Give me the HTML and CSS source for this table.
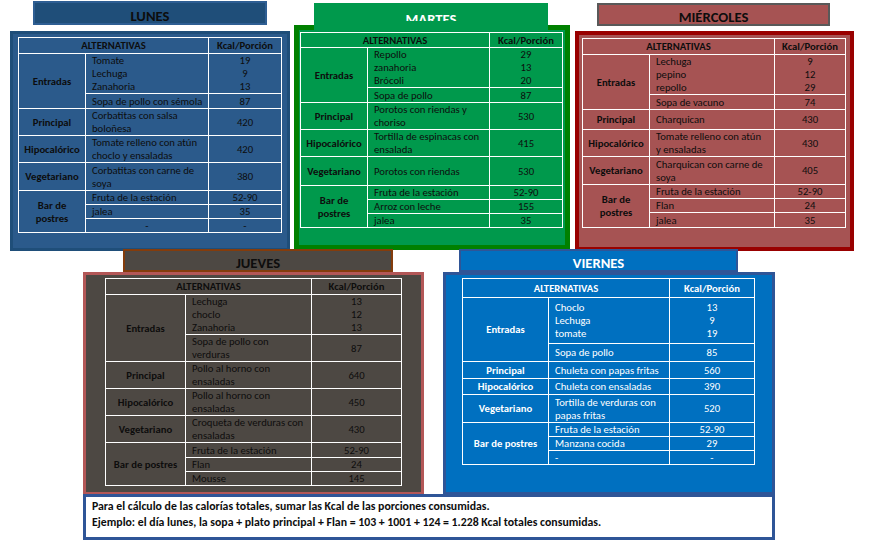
FILE: index.html
```html
<!DOCTYPE html>
<html lang="es">
<head>
<meta charset="utf-8">
<title>Menú semanal</title>
<link rel="stylesheet" href="styles.css">
</head>
<body>
<div class="canvas">

  <section class="panel lunes">
    <table class="menu">
      <colgroup><col class="c1"><col class="c2"><col class="c3"></colgroup>
      <tr class="hdr"><th colspan="2">ALTERNATIVAS</th><th>Kcal/Porción</th></tr>
      <tr class="r40"><th rowspan="2">Entradas</th><td>Tomate<br>Lechuga<br>Zanahoria</td><td class="n">19<br>9<br>13</td></tr>
      <tr class="r15"><td>Sopa de pollo con sémola</td><td class="n">87</td></tr>
      <tr class="r27"><th>Principal</th><td>Corbatitas con salsa<br>boloñesa</td><td class="n">420</td></tr>
      <tr class="r27"><th>Hipocalórico</th><td>Tomate relleno con atún<br>choclo y ensaladas</td><td class="n">420</td></tr>
      <tr class="r28"><th>Vegetariano</th><td>Corbatitas con carne de<br>soya</td><td class="n">380</td></tr>
      <tr class="r14"><th rowspan="3">Bar de<br>postres</th><td>Fruta de la estación</td><td class="n">52-90</td></tr>
      <tr class="r14"><td>jalea</td><td class="n">35</td></tr>
      <tr class="r12"><td class="n">-</td><td class="n">-</td></tr>
    </table>
  </section>
  <div class="title t-lunes">LUNES</div>

  <section class="panel martes">
    <table class="menu">
      <colgroup><col class="c1"><col class="c2"><col class="c3"></colgroup>
      <tr class="hdr m"><th colspan="2">ALTERNATIVAS</th><th>Kcal/Porción</th></tr>
      <tr class="r40"><th rowspan="2">Entradas</th><td>Repollo<br>zanahoria<br>Brócoli</td><td class="n">29<br>13<br>20</td></tr>
      <tr class="r15"><td>Sopa de pollo</td><td class="n">87</td></tr>
      <tr class="r27"><th>Principal</th><td>Porotos con riendas y<br>choriso</td><td class="n">530</td></tr>
      <tr class="r26"><th>Hipocalórico</th><td>Tortilla de espinacas con<br>ensalada</td><td class="n">415</td></tr>
      <tr class="r29"><th>Vegetariano</th><td>Porotos con riendas</td><td class="n">530</td></tr>
      <tr class="r13"><th rowspan="3">Bar de<br>postres</th><td>Fruta de la estación</td><td class="n">52-90</td></tr>
      <tr class="r14"><td>Arroz con leche</td><td class="n">155</td></tr>
      <tr class="r13"><td>jalea</td><td class="n">35</td></tr>
    </table>
  </section>
  <div class="title t-martes"><span class="clip">MARTES</span></div>

  <section class="panel miercoles">
    <table class="menu">
      <colgroup><col class="c1"><col class="c2"><col class="c3"></colgroup>
      <tr class="hdr"><th colspan="2">ALTERNATIVAS</th><th>Kcal/Porción</th></tr>
      <tr class="r40"><th rowspan="2">Entradas</th><td>Lechuga<br>pepino<br>repollo</td><td class="n">9<br>12<br>29</td></tr>
      <tr class="r15"><td>Sopa de vacuno</td><td class="n">74</td></tr>
      <tr class="r20"><th>Principal</th><td>Charquican</td><td class="n">430</td></tr>
      <tr class="r27"><th>Hipocalórico</th><td>Tomate relleno con atún<br>y ensaladas</td><td class="n">430</td></tr>
      <tr class="r28"><th>Vegetariano</th><td>Charquican con carne de<br>soya</td><td class="n">405</td></tr>
      <tr class="r13"><th rowspan="3">Bar de<br>postres</th><td>Fruta de la estación</td><td class="n">52-90</td></tr>
      <tr class="r14"><td>Flan</td><td class="n">24</td></tr>
      <tr class="r15"><td>jalea</td><td class="n">35</td></tr>
    </table>
  </section>
  <div class="title t-miercoles">MIÉRCOLES</div>

  <section class="panel jueves">
    <table class="menu">
      <colgroup><col class="c1"><col class="c2"><col class="c3"></colgroup>
      <tr class="hdr"><th colspan="2">ALTERNATIVAS</th><th>Kcal/Porción</th></tr>
      <tr class="r40"><th rowspan="2">Entradas</th><td>Lechuga<br>choclo<br>Zanahoria</td><td class="n">13<br>12<br>13</td></tr>
      <tr class="r27"><td>Sopa de pollo con<br>verduras</td><td class="n">87</td></tr>
      <tr class="r27"><th>Principal</th><td>Pollo al horno con<br>ensaladas</td><td class="n">640</td></tr>
      <tr class="r27"><th>Hipocalórico</th><td>Pollo al horno con<br>ensaladas</td><td class="n">450</td></tr>
      <tr class="r27"><th>Vegetariano</th><td>Croqueta de verduras con<br>ensaladas</td><td class="n">430</td></tr>
      <tr class="r15"><th rowspan="3">Bar de postres</th><td>Fruta de la estación</td><td class="n">52-90</td></tr>
      <tr class="r14"><td>Flan</td><td class="n">24</td></tr>
      <tr class="r13"><td>Mousse</td><td class="n">145</td></tr>
    </table>
  </section>
  <div class="title t-jueves">JUEVES</div>

  <section class="panel viernes">
    <table class="menu">
      <colgroup><col class="c1"><col class="c2"><col class="c3"></colgroup>
      <tr class="hdr v"><th colspan="2">ALTERNATIVAS</th><th>Kcal/Porción</th></tr>
      <tr class="r46"><th rowspan="2">Entradas</th><td>Choclo<br>Lechuga<br>tomate</td><td class="n">13<br>9<br>19</td></tr>
      <tr class="r18"><td>Sopa de pollo</td><td class="n">85</td></tr>
      <tr class="r17"><th>Principal</th><td>Chuleta con papas fritas</td><td class="n">560</td></tr>
      <tr class="r16"><th>Hipocalórico</th><td>Chuleta con ensaladas</td><td class="n">390</td></tr>
      <tr class="r28"><th>Vegetariano</th><td>Tortilla de verduras con<br>papas fritas</td><td class="n">520</td></tr>
      <tr class="r14"><th rowspan="3">Bar de postres</th><td>Fruta de la estación</td><td class="n">52-90</td></tr>
      <tr class="r14"><td>Manzana cocida</td><td class="n">29</td></tr>
      <tr class="r12"><td>-</td><td class="n">-</td></tr>
    </table>
  </section>
  <div class="title t-viernes">VIERNES</div>

  <div class="note">
    <p>Para el cálculo de las calorías totales, sumar las Kcal de las porciones consumidas.</p>
    <p>Ejemplo: el día lunes, la sopa + plato principal + Flan = 103 + 1001 + 124 = 1.228 Kcal totales consumidas.</p>
  </div>

</div>
</body>
</html>
```

FILE: styles.css
```css
html, body {
  margin: 0;
  padding: 0;
  background: #ffffff;
}

.canvas {
  position: relative;
  width: 870px;
  height: 541px;
  overflow: hidden;
  background: #ffffff;
  font-family: Carlito, "Liberation Sans Narrow", "Liberation Sans", sans-serif;
  color: #0d0d0d;
}

/* ---------- panels (placed on a free slide canvas) ---------- */
.panel {
  position: absolute;
  box-sizing: border-box;
}

.lunes {
  left: 10px; top: 31px; width: 280px; height: 220px;
  background: #2b5a8b;
  border: 3px solid #1f4e79;
  padding: 3px 0 0 5px;
}
.lunes .menu { width: 263px; }
.lunes .c1 { width: 67px; }
.lunes .c2 { width: 123px; }
.lunes .c3 { width: 73px; }

.martes {
  left: 294px; top: 25px; width: 276px; height: 225px;
  background: #00994c;
  border: 5px solid #008000;
  padding: 2px 0 0 1px;
}
.martes .menu { width: 262px; }
.martes .c1 { width: 67px; }
.martes .c2 { width: 122px; }
.martes .c3 { width: 73px; }

.miercoles {
  left: 575px; top: 31px; width: 279px; height: 220px;
  background: #a65353;
  border: 4px solid #990000;
  padding: 3px 0 0 3px;
}
.miercoles .menu { width: 263px; }
.miercoles .c1 { width: 67px; }
.miercoles .c2 { width: 125px; }
.miercoles .c3 { width: 71px; }

.jueves {
  left: 83px; top: 272px; width: 341px; height: 223px;
  background: #4d4843;
  border: 3px solid #b35757;
  padding: 3px 0 0 19px;
}
.jueves .menu { width: 296px; }
.jueves .c1 { width: 80px; }
.jueves .c2 { width: 126px; }
.jueves .c3 { width: 90px; }

.viernes {
  left: 443px; top: 272px; width: 332px; height: 223px;
  background: #0070c0;
  border: 3px solid #2f5597;
  padding: 3px 0 0 16px;
  color: #ffffff;
}
.viernes .menu { width: 292px; }
.viernes .c1 { width: 86px; }
.viernes .c2 { width: 121px; }
.viernes .c3 { width: 85px; }

/* ---------- day titles ---------- */
.title {
  position: absolute;
  box-sizing: border-box;
  text-align: center;
  font-weight: bold;
  font-size: 14.67px;
  line-height: 18px;
  padding-top: 3px;
  color: #0d0d0d;
}

.t-lunes {
  left: 33px; top: 1px; width: 234px; height: 24px;
  background: #1f4e79;
  border: 2px solid #2e5e93;
  padding-top: 4px;
}

.t-martes {
  left: 314px; top: 3px; width: 234px; height: 28px;
  background: #00994c;
  color: #ffffff;
  padding-top: 0;
}
.t-martes .clip {
  display: block;
  height: 18px;
  overflow: hidden;
  line-height: 32px;
}

.t-miercoles {
  left: 597px; top: 3px; width: 233px; height: 23px;
  background: #a65353;
  border: 2px solid #595959;
  padding-top: 3px;
}

.t-jueves {
  left: 123px; top: 249px; width: 270px; height: 23px;
  background: #4d4843;
  border: 2px solid #843c0c;
}

.t-viernes {
  left: 459px; top: 249px; width: 279px; height: 23px;
  background: #0070c0;
  border: 2px solid #2f5597;
  color: #ffffff;
}

/* ---------- menu tables ---------- */
.menu {
  border-collapse: collapse;
  table-layout: fixed;
  font-size: 10.67px;
  line-height: 13px;
  color: inherit;
}

.menu th,
.menu td {
  border: 1px solid #ffffff;
  padding: 0 0 0 6px;
  vertical-align: middle;
  white-space: nowrap;
  overflow: hidden;
}

.menu th {
  font-weight: bold;
  text-align: center;
  padding: 0;
}

.menu td.n {
  text-align: center;
  padding: 0;
}

.menu .hdr { height: 16px; }
.menu .hdr.m { height: 15px; }
.menu .hdr.v { height: 19px; }

.r12 { height: 12px; }
.r13 { height: 13px; }
.r14 { height: 14px; }
.r15 { height: 15px; }
.r16 { height: 16px; }
.r17 { height: 17px; }
.r18 { height: 18px; }
.r20 { height: 20px; }
.r26 { height: 26px; }
.r27 { height: 27px; }
.r28 { height: 28px; }
.r29 { height: 29px; }
.r40 { height: 40px; }
.r46 { height: 46px; }

/* ---------- bottom note ---------- */
.note {
  position: absolute;
  left: 83px; top: 494px; width: 692px; height: 46px;
  box-sizing: border-box;
  background: #ffffff;
  border: 3px solid #2f5597;
  padding: 1px 0 0 6px;
  font-weight: bold;
  font-size: 11.8px;
  line-height: 16px;
  color: #0d0d0d;
}
.note p { margin: 0; }
```
